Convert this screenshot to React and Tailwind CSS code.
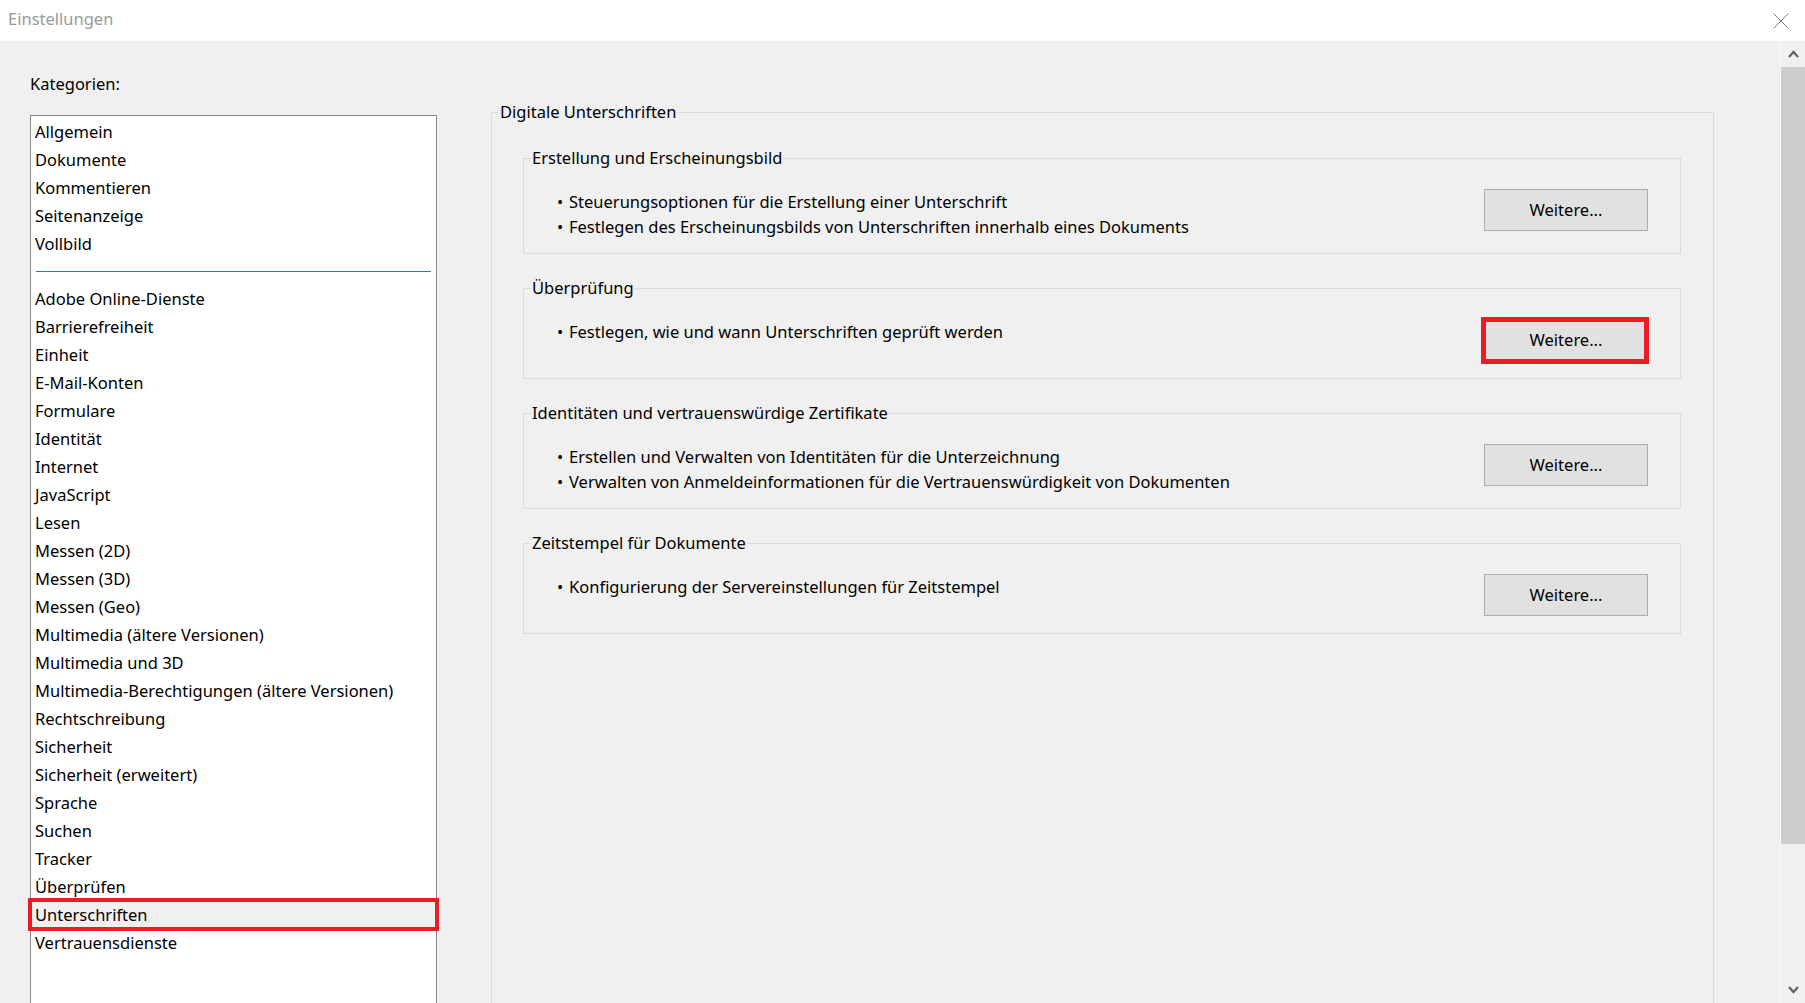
import { useState } from 'react'

const generalItems = ['Allgemein', 'Dokumente', 'Kommentieren', 'Seitenanzeige', 'Vollbild']

const moreItems = [
  'Adobe Online-Dienste',
  'Barrierefreiheit',
  'Einheit',
  'E-Mail-Konten',
  'Formulare',
  'Identität',
  'Internet',
  'JavaScript',
  'Lesen',
  'Messen (2D)',
  'Messen (3D)',
  'Messen (Geo)',
  'Multimedia (ältere Versionen)',
  'Multimedia und 3D',
  'Multimedia-Berechtigungen (ältere Versionen)',
  'Rechtschreibung',
  'Sicherheit',
  'Sicherheit (erweitert)',
  'Sprache',
  'Suchen',
  'Tracker',
  'Überprüfen',
  'Unterschriften',
  'Vertrauensdienste',
]

const sections = [
  {
    title: 'Erstellung und Erscheinungsbild',
    bullets: [
      'Steuerungsoptionen für die Erstellung einer Unterschrift',
      'Festlegen des Erscheinungsbilds von Unterschriften innerhalb eines Dokuments',
    ],
  },
  {
    title: 'Überprüfung',
    bullets: ['Festlegen, wie und wann Unterschriften geprüft werden'],
    marked: true,
  },
  {
    title: 'Identitäten und vertrauenswürdige Zertifikate',
    bullets: [
      'Erstellen und Verwalten von Identitäten für die Unterzeichnung',
      'Verwalten von Anmeldeinformationen für die Vertrauenswürdigkeit von Dokumenten',
    ],
  },
  {
    title: 'Zeitstempel für Dokumente',
    bullets: ['Konfigurierung der Servereinstellungen für Zeitstempel'],
  },
]

function ListItem({ label, selected, onClick }) {
  return (
    <div
      onClick={onClick}
      className={`relative h-[28px] leading-[28px] pl-[4px] whitespace-nowrap cursor-default ${selected ? 'bg-[#f0f0f0]' : ''}`}
    >
      {label}
      {/* red annotation frame */}
      {selected && (
        <div className="absolute -left-[3px] -right-[3px] -top-[3px] -bottom-[2px] border-4 border-[#ed1c24] pointer-events-none"></div>
      )}
    </div>
  )
}

function Section({ title, bullets, marked }) {
  return (
    <fieldset className="border border-[#dcdcdc]">
      <legend className="ml-[7px] px-[1px] leading-[28px]">{title}</legend>
      <div className="flex items-start justify-between pl-[33px] pr-[32px] pt-[17px] pb-[14px]">
        <div className="leading-[25px]">
          {bullets.map((b) => (
            <div key={b} className="flex whitespace-nowrap">
              <span className="w-[12px]">•</span>
              <span>{b}</span>
            </div>
          ))}
        </div>
        <div className="relative mb-[3px]">
          <button className="w-[164px] h-[42px] bg-[#e1e1e1] border border-[#adadad] text-black">
            Weitere...
          </button>
          {marked && (
            <div className="absolute -left-[3px] -right-[1px] -top-[2px] -bottom-[3px] border-[5px] border-[#ed1c24] pointer-events-none"></div>
          )}
        </div>
      </div>
    </fieldset>
  )
}

export default function App() {
  const [selected, setSelected] = useState('Unterschriften')

  return (
    <div className="w-[1805px] h-[1003px] overflow-hidden flex flex-col bg-white text-black text-[16.5px] font-['Segoe_UI','Noto_Sans',sans-serif]">
      {/* Title bar */}
      <div className="h-[41px] shrink-0 flex items-center justify-between pl-[8px] pr-[16px]">
        <span className="text-[#9a9a9a] -mt-[2px]">Einstellungen</span>
        <svg width="16" height="16" viewBox="0 0 16 16" className="text-[#808080]">
          <path d="M0.5 0.5 L15.5 15.5 M15.5 0.5 L0.5 15.5" stroke="currentColor" strokeWidth="1" />
        </svg>
      </div>

      <div className="flex-1 min-h-0 flex bg-[#f0f0f0]">
        <div className="flex-1 min-w-0 flex">
          {/* Categories */}
          <div className="w-[437px] shrink-0 pl-[30px] pt-[29px] flex flex-col">
            <div className="leading-[28px]">Kategorien:</div>
            <div className="mt-[17px] h-[960px] shrink-0 border border-[#828790] bg-white pt-[2px]">
              {generalItems.map((item) => (
                <ListItem key={item} label={item} selected={selected === item} onClick={() => setSelected(item)} />
              ))}
              <div className="h-[27px] flex items-center px-[5px]">
                <div className="flex-1 h-px bg-[#1979ca]"></div>
              </div>
              {moreItems.map((item) => (
                <ListItem key={item} label={item} selected={selected === item} onClick={() => setSelected(item)} />
              ))}
            </div>
          </div>

          {/* Digital signatures panel */}
          <div className="ml-[54px] w-[1223px] shrink-0 pt-[57px]">
            <fieldset className="h-[960px] border border-[#dcdcdc]">
              <legend className="ml-[7px] px-[1px] leading-[28px]">Digitale Unterschriften</legend>
              <div className="pl-[31px] pr-[32px] pt-[18px] flex flex-col gap-[20px]">
                {sections.map((s) => (
                  <Section key={s.title} {...s} />
                ))}
              </div>
            </fieldset>
          </div>
        </div>

        {/* Scrollbar */}
        <div className="w-[25px] shrink-0 border-l border-[#fafafa] flex flex-col">
          <div className="h-[26px] flex items-center justify-center">
            <svg width="11" height="8" viewBox="0 0 11 8">
              <path d="M1 7 L5.5 2 L10 7" fill="none" stroke="#606060" strokeWidth="2.2" />
            </svg>
          </div>
          <div className="h-[777px] bg-[#cdcdcd]"></div>
          <div className="flex-1"></div>
          <div className="h-[26px] flex items-center justify-center">
            <svg width="11" height="8" viewBox="0 0 11 8">
              <path d="M1 1 L5.5 6 L10 1" fill="none" stroke="#606060" strokeWidth="2.2" />
            </svg>
          </div>
        </div>
      </div>
    </div>
  )
}
